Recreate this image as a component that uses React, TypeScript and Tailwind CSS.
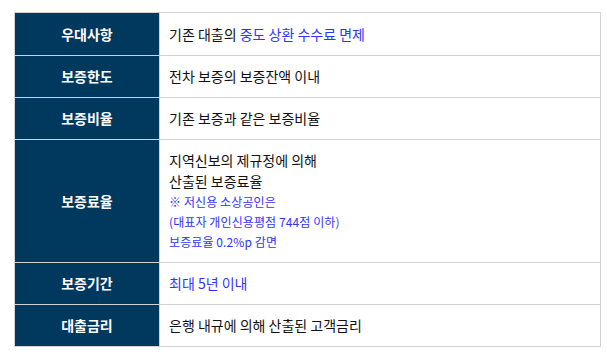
export default function App() {
  const rows: { label: string; content: React.ReactNode; tall?: boolean }[] = [
    {
      label: '우대사항',
      content: (
        <span>
          기존 대출의 <span className="text-[#3232ff]">중도 상환 수수료 면제</span>
        </span>
      ),
    },
    { label: '보증한도', content: '전차 보증의 보증잔액 이내' },
    { label: '보증비율', content: '기존 보증과 같은 보증비율' },
    {
      label: '보증료율',
      tall: true,
      content: (
        <div>
          <p className="leading-[21px]">지역신보의 제규정에 의해</p>
          <p className="leading-[21px]">산출된 보증료율</p>
          <p className="text-[12px] leading-[20px] tracking-[0.1px] text-[#3232ff]">※ 저신용 소상공인은</p>
          <p className="text-[12px] leading-[20px] tracking-[0.1px] text-[#3232ff]">(대표자 개인신용평점 744점 이하)</p>
          <p className="text-[12px] leading-[20px] tracking-[0.1px] text-[#3232ff]">보증료율 0.2%p 감면</p>
        </div>
      ),
    },
    { label: '보증기간', content: <span className="text-[#3232ff]">최대 5년 이내</span> },
    { label: '대출금리', content: '은행 내규에 의해 산출된 고객금리' },
  ]

  return (
    <div className="w-[607px] h-[358px] bg-white pt-[12px] pl-[14px] font-['Noto_Sans_CJK_KR',sans-serif] text-[14px] text-[#111]">
      <div className="w-[587px] border border-[#d2d2d2]">
        {rows.map((r, i) => (
          <div
            key={r.label}
            className={`flex ${i > 0 ? 'border-t border-[#d2d2d2]' : ''} ${r.tall ? 'h-[123px]' : 'h-[42px]'} ${i === 0 ? 'h-[41px]' : ''}`}
          >
            <div className="w-[145px] shrink-0 bg-[#01385e] text-white font-bold flex items-center justify-center border-r border-[#d2d2d2]">
              {r.label}
            </div>
            <div className="flex-1 flex items-center pl-[9px]">{r.content}</div>
          </div>
        ))}
      </div>
    </div>
  )
}
